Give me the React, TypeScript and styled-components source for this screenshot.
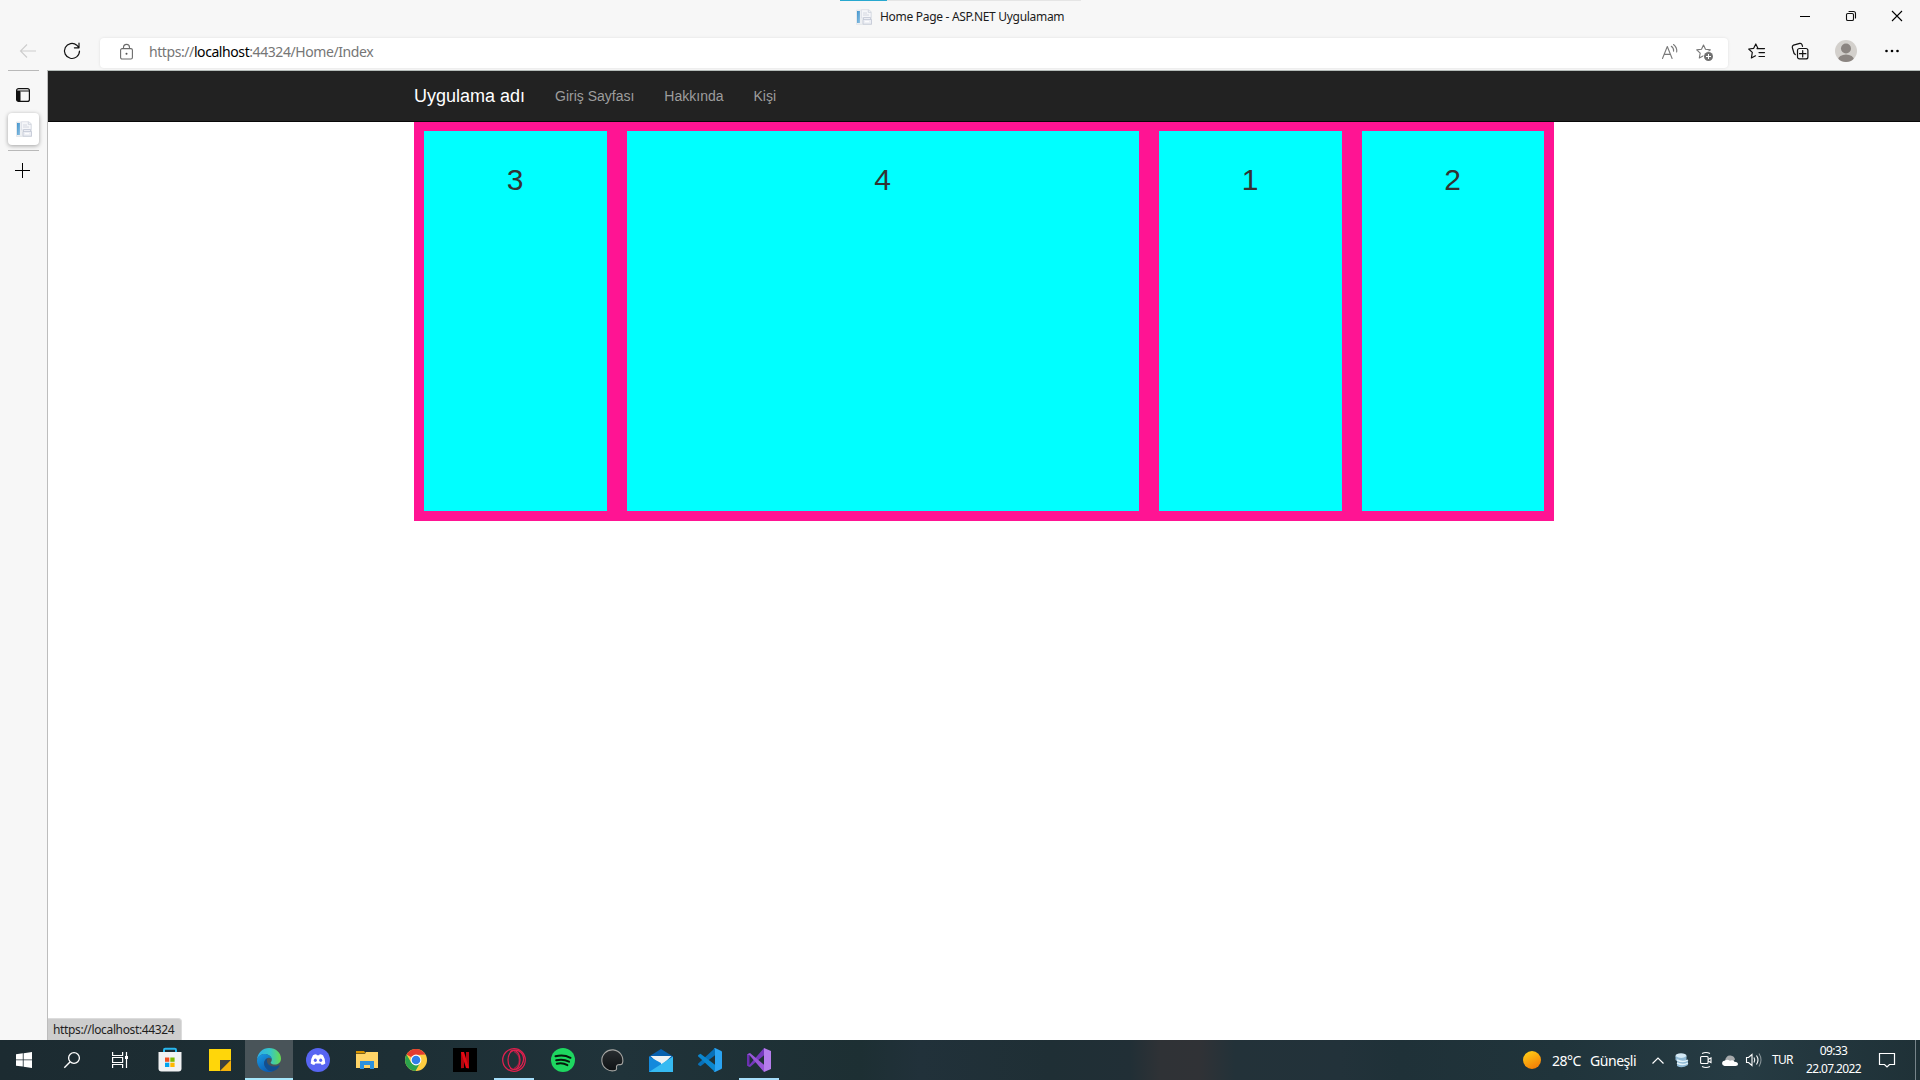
import React from 'react';
import styled, { createGlobalStyle } from 'styled-components';

const ui = `"Noto Sans", "Open Sans", sans-serif`;

const Global = createGlobalStyle`
  * { box-sizing: border-box; }
  body { margin: 0; background: #f7f7f7; overflow: hidden; }
  svg { display: block; overflow: visible; flex: none; }
`;

const Screen = styled.div`
  display: flex;
  flex-direction: column;
  width: 1920px;
  height: 1080px;
  background: #f7f7f7;
  font-family: ${ui};
`;

const TitleBar = styled.header`
  display: grid;
  grid-template-columns: 840px 241px 1fr;
  height: 34px;
`;

const TitleTab = styled.div`
  grid-column: 2;
  display: flex;
  align-items: center;
  padding: 0 0 2px 16px;
  gap: 8px;
  border-top: 1px solid #e5e5e5;
  border-image: linear-gradient(90deg, #28a8cf 48px, #e5e5e5 48px) 1;
`;

const TitleText = styled.span<{ $w: number }>`
  width: ${p => p.$w}px;
  font-size: 12px;
  line-height: 16px;
  letter-spacing: -0.3px;
  color: #1b1b1b;
  white-space: nowrap;
`;

const WindowButtons = styled.div`
  display: flex;
  justify-content: flex-end;
`;

const WindowButton = styled.div`
  display: grid;
  place-items: center;
  width: 46px;
  height: 32px;
`;

const Toolbar = styled.div`
  display: flex;
  align-items: center;
  height: 36px;
  padding-bottom: 2px;
`;

const ToolSlot = styled.div<{ $w: number }>`
  display: grid;
  place-items: center;
  width: ${p => p.$w}px;
  height: 32px;
  flex: none;
`;

const AddressBar = styled.div`
  display: flex;
  align-items: center;
  width: 1628px;
  height: 30px;
  margin: 3px 0 0 0;
  background: #fff;
  border-radius: 4px;
  box-shadow: 0 0 3px rgba(0, 0, 0, 0.1);
`;

const Url = styled.div`
  flex: 1;
  padding-bottom: 2px;
  font-size: 14px;
  line-height: 20px;
  color: #767676;
  letter-spacing: -0.42px;
  b { font-weight: 400; color: #000; }
`;

const Body = styled.div`
  display: flex;
  height: 970px;
`;

const Rail = styled.aside`
  display: flex;
  flex-direction: column;
  align-items: center;
  width: 47px;
  flex: none;
`;

const RailLine = styled.div`
  width: 31px;
  height: 1px;
  background: #b9b9b9;
`;

const RailSlot = styled.div<{ $h: number; $top?: number }>`
  display: grid;
  place-items: center;
  width: 31px;
  height: ${p => p.$h}px;
  padding: ${p => p.$top ?? 0}px 2px 0 0;
`;

const RailTab = styled(RailSlot)`
  padding: 0 0 0 1px;
  background: #fff;
  border-radius: 4px;
  margin-bottom: 5px;
  box-shadow: 0 1px 4px rgba(0, 0, 0, 0.35);
`;

const Page = styled.main`
  position: relative;
  flex: 1;
  background: #fff;
  border-top: 1px solid #b5bcb9;
  border-left: 1px solid #bdbdbd;
  font-family: "Liberation Sans", Arial, sans-serif;
`;

const NavBar = styled.nav`
  display: flex;
  align-items: center;
  height: 51px;
  padding-left: 366px;
  background: #222;
  border-bottom: 1px solid #080808;
`;

const Brand = styled.a`
  width: 126px;
  font-size: 18px;
  line-height: 20px;
  color: #fff;
`;

const NavLink = styled.a`
  padding: 0 15px;
  font-size: 14px;
  line-height: 20px;
  color: #9d9d9d;
`;

const Container = styled.section`
  display: grid;
  grid-template-columns: 183px 512px 183px 182px;
  gap: 20px;
  width: 1140px;
  height: 399px;
  margin-left: 366px;
  padding: 9px 10px 10px;
  background: #ff1493;
`;

const Cell = styled.div`
  padding: 32px 1px 0 0;
  background: #0ff;
  color: #333;
  font-size: 30px;
  line-height: 33px;
  text-align: center;
`;

const StatusBubble = styled.div`
  position: absolute;
  left: 0;
  bottom: 0;
  width: 134px;
  height: 22px;
  padding: 3px 0 0 5px;
  background: #cdcdcd;
  border: 1px solid #dcdcdc;
  border-width: 1px 1px 0 0;
  border-radius: 0 4px 0 0;
  font: 12px/16px ${ui};
  letter-spacing: -0.36px;
  color: #1e1e1e;
  white-space: nowrap;
`;

const Taskbar = styled.footer`
  display: flex;
  height: 40px;
  background: linear-gradient(90deg, #1c2b31 0, #1d2f35 400px, #20333a 620px, #1d2f33 860px, #21313a 920px, #1f2f35 1050px, #212f36 1130px, #2f3236 1160px, #303236 1200px, #233239 1235px, #22323a 1340px, #1f3138 1400px, #20343b 1560px, #263b43 1740px, #1f3137 1920px);
`;

const Task = styled.div<{ $w?: number; $active?: boolean; $running?: boolean }>`
  display: grid;
  place-items: center;
  width: ${p => p.$w ?? 49}px;
  flex: none;
  background: ${p => (p.$active ? '#495459' : 'transparent')};
  box-shadow: ${p => (p.$active ? 'inset 0 -2px #a6e7fb' : 'none')};
  background-image: ${p => (p.$running ? 'linear-gradient(#a6defa, #a6defa)' : 'none')};
  background-size: 40px 2px;
  background-position: center bottom;
  background-repeat: no-repeat;
`;

const Tray = styled.div`
  display: flex;
  align-items: center;
  margin-left: auto;
  color: #fff;
`;

const TraySlot = styled.div<{ $w: number }>`
  display: grid;
  place-items: center;
  width: ${p => p.$w}px;
  height: 40px;
`;

const TrayText = styled.div<{ $w: number; $size: number; $track?: number; $top?: number }>`
  width: ${p => p.$w}px;
  padding-top: ${p => p.$top ?? 0}px;
  font-size: ${p => p.$size}px;
  letter-spacing: ${p => p.$track ?? 0}px;
  line-height: 18px;
  white-space: nowrap;
`;

const Clock = styled(TrayText)`
  text-align: center;
  line-height: 18px;
  padding-bottom: 1px;
`;

const DesktopEdge = styled.div`
  width: 5px;
  height: 40px;
  border-left: 1px solid #77848a;
`;

const stroke = { fill: 'none', stroke: '#111', strokeWidth: 1.1, strokeLinecap: 'round', strokeLinejoin: 'round' } as const;

const Favicon = () => (
  <svg width="16" height="16" viewBox="0 0 16 16">
    <defs>
      <linearGradient id="fav" x2="1" y2="1"><stop stopColor="#3f93cc" /><stop offset="1" stopColor="#93c3e3" /></linearGradient>
    </defs>
    <path d="M.5 1h13l2 2v12.500H.5z" fill="#edeff2" stroke="#dfe2e6" strokeWidth=".7" />
    <path d="M1 2h3v12H1z" fill="url(#fav)" />
    <path d="M5.500 .7h7l2.500 2.500V9H5.500z" fill="#f5f6f9" stroke="#d5d9e2" strokeWidth=".6" />
    <path d="M12.300 .7v2.700H15M7 4h4M7 6h6" stroke="#cbd0db" fill="none" strokeWidth=".8" />
    <path d="M7.500 10.500V8.500h7v2M7 10.500h8.500v4.700H7z" fill="#eceef4" stroke="#c2c7d4" strokeWidth=".8" />
    <path d="M9 12.700h4" stroke="#fff" />
  </svg>
);

const Star = 'M7.500 1 L9.500 5.300 L14.300 5.900 L10.800 9.200 L11.700 14 L7.500 11.700 L3.300 14 L4.200 9.200 L.7 5.900 L5.500 5.300 Z';

const Edge = () => (
  <svg width="24" height="24" viewBox="0 0 24 24">
    <defs>
      <linearGradient id="eg" x1="0" y1=".4" x2="1" y2=".4"><stop stopColor="#2daeea" /><stop offset=".55" stopColor="#36c6c7" /><stop offset="1" stopColor="#68dc4d" /></linearGradient>
      <linearGradient id="eb" x1="0" y1="0" x2=".6" y2="1"><stop stopColor="#199ce4" /><stop offset="1" stopColor="#0b5db3" /></linearGradient>
    </defs>
    <path d="M0 12C.4 4.500 6 0 12 0c7 0 12 5 12 10.500 0 4-3 6-6.200 6-3.500 0-4.400-1.500-4-2.200.6-.8 1-1.500 1-2.800C14.800 8.500 11.500 6 7.500 6 4 6 1 8.500 0 12z" fill="url(#eg)" />
    <path d="M0 12C1 8.300 4 6 7.500 6c4 0 7.300 2.500 7.300 5.500-1-1.300-2.300-2-4-1.600-2.800.7-4.300 4-3.300 7.200 1.200 4 5 6.500 8.500 6.200C14 24 12.500 24 11.500 24 5 24-.3 19 0 12z" fill="url(#eb)" />
    <path d="M10.800 9.900C7 12 6 16 8.700 19.800c2.200 3 5 3.900 7.500 3.400 2.800-1 4.900-2.700 6.200-5 .4-.8-.2-1-.8-.7C17 20 11.500 18 10.200 14.500c-.6-1.700-.3-3.400.6-4.600z" fill="#114f91" />
  </svg>
);

const VisualStudio = ({ code }: { code?: boolean }) => (
  <svg width="24" height="24" viewBox="0 0 24 24">
    {code ? (
      <>
        <path d="M17 0v7.200L2.500 18.200.3 17c-.4-.4-.4-1 0-1.400z" fill="#0871b9" />
        <path d="M17 24v-7.200L2.500 5.800.3 7c-.4.400-.4 1 0 1.400z" fill="#0b87d0" />
        <path d="M17 0l5.800 2.700c.7.300 1.200.8 1.200 1.500v15.600c0 .7-.5 1.200-1.200 1.500L17 24c-.5 0-1-.2-1.400-.6.8.3 1.400 0 1.400-.8V1.400c0-.8-.6-1.100-1.400-.8.4-.4.900-.6 1.400-.6z" fill="#2ba4f2" />
      </>
    ) : (
      <>
        <path d="M0 6.500 2.500 5v14L0 17.500z" fill="#6a2faf" />
        <path d="M17 0v7.300L3 19l-3-1.500 2.300-.5z" fill="#7438bd" />
        <path d="M17 24v-7.300L3 5 0 6.500l2.300.5z" fill="#9856d8" />
        <path d="M17 0l7 3v18l-7 3z" fill="#b57dec" />
      </>
    )}
  </svg>
);

export default function App() {
  return (
    <Screen>
      <Global />
      <TitleBar>
        <TitleTab>
          <Favicon />
          <TitleText $w={184}>Home Page - ASP.NET Uygulamam</TitleText>
        </TitleTab>
        <WindowButtons>
          <WindowButton><svg width="10" height="10"><path d="M0 5.500h10" stroke="#000" /></svg></WindowButton>
          <WindowButton>
            <svg width="10" height="10"><rect x=".5" y="2.500" width="7" height="7" rx="1.300" {...stroke} /><path d="M3 .5h4.500q2 0 2 2V7" {...stroke} /></svg>
          </WindowButton>
          <WindowButton><svg width="10" height="10"><path d="M0 0l10 10M10 0L0 10" stroke="#000" strokeWidth="1.100" /></svg></WindowButton>
        </WindowButtons>
      </TitleBar>

      <Toolbar>
        <ToolSlot $w={56}><svg width="16" height="14"><path d="M16 7H.5M7 .5L.5 7 7 13.500" fill="none" stroke="#cdcdcd" strokeWidth="1.100" /></svg></ToolSlot>
        <ToolSlot $w={32}>
          <svg width="16" height="16"><path d="M15.500 8A7.500 7.500 0 1 1 12.800 2.200L14.700 4.400M15 .2V4.800H10.400" {...stroke} strokeWidth="1.200" /></svg>
        </ToolSlot>
        <ToolSlot $w={12} />
        <AddressBar>
          <ToolSlot $w={3} />
          <ToolSlot $w={46}>
            <svg width="13" height="18"><rect x=".6" y="4.600" width="11.800" height="10.400" rx="1.500" fill="none" stroke="#6b6b6b" strokeWidth="1.100" /><path d="M3.500 4.500V3.400a3 3 0 0 1 6 0v1.100" fill="none" stroke="#6b6b6b" strokeWidth="1.100" /><circle cx="6.500" cy="9.800" r="1" fill="#555" /></svg>
          </ToolSlot>
          <Url>https://<b>localhost</b>:44324/Home/Index</Url>
          <ToolSlot $w={34}>
            <svg width="16" height="17" viewBox="0 0 16 17"><path d="M.5 14.500 5.300 2.500l4.800 12M2.300 10.400h6M9.300 2.300q2.700 1.800 2.300 5M11.500.5q3.800 3 3.200 7.500" {...stroke} stroke="#7a7a7a" /></svg>
          </ToolSlot>
          <ToolSlot $w={36}>
            <svg width="18" height="17"><path d={Star} {...stroke} stroke="#777" /><circle cx="12.500" cy="12.500" r="5.200" fill="#fff" /><circle cx="12.500" cy="12.500" r="4.500" fill="#707070" /><path d="M10 12.500h5M12.500 10v5" stroke="#fff" /></svg>
          </ToolSlot>
          <ToolSlot $w={5} />
        </AddressBar>
        <ToolSlot $w={56}>
          <svg width="17" height="16"><path d="M10 5.500 7.800 1 5.700 5.300.7 6l3.600 3.400L3.400 15l4.100-2.200M9 5.600h7.500M11 9.600h5.500M11 13.500h5.500" {...stroke} strokeWidth="1.200" /></svg>
        </ToolSlot>
        <ToolSlot $w={32}>
          <svg width="17" height="17"><rect x="5.500" y="5.500" width="10.400" height="10.400" rx="2" {...stroke} strokeWidth="1.200" /><path d="M10.700 7.500v6.400M7.500 10.700h6.400M3.300 11.500 2.100 10.500.3 4.500Q0 2.700 1.500 2.100L7.800.4q1.600-.3 2.200 1.200l.5 1.800" {...stroke} strokeWidth="1.200" /></svg>
        </ToolSlot>
        <ToolSlot $w={60}>
          <svg width="22" height="22"><defs><clipPath id="av"><circle cx="11" cy="11" r="11" /></clipPath></defs><g clipPath="url(#av)"><rect width="22" height="22" fill="#d3d0cc" /><circle cx="11" cy="8.500" r="5" fill="#8b8581" /><ellipse cx="11" cy="20" rx="8" ry="5.500" fill="#8b8581" /></g></svg>
        </ToolSlot>
        <ToolSlot $w={32}><svg width="14" height="4"><circle cx="1.500" cy="2" r="1.300" /><circle cx="7" cy="2" r="1.300" /><circle cx="12.500" cy="2" r="1.300" /></svg></ToolSlot>
      </Toolbar>

      <Body>
        <Rail>
          <RailLine />
          <RailSlot $h={42} $top={6}>
            <svg width="14" height="14"><rect x=".6" y=".6" width="12.800" height="12.800" rx="2" {...stroke} strokeWidth="1.200" /><path d="M1 3.500h3v9.500H2L1 12zM1 3h12" stroke="#111" fill="#111" /></svg>
          </RailSlot>
          <RailTab $h={32}><Favicon /></RailTab>
          <RailLine />
          <RailSlot $h={39}><svg width="15" height="15"><path d="M0 7.500h15M7.500 0v15" stroke="#000" /></svg></RailSlot>
        </Rail>
        <Page>
          <NavBar>
            <Brand>Uygulama adı</Brand>
            <NavLink>Giriş Sayfası</NavLink>
            <NavLink>Hakkında</NavLink>
            <NavLink>Kişi</NavLink>
          </NavBar>
          <Container>
            {[3, 4, 1, 2].map(n => <Cell key={n}>{n}</Cell>)}
          </Container>
          <StatusBubble>https://localhost:44324</StatusBubble>
        </Page>
      </Body>

      <Taskbar>
        <Task $w={48}><svg width="16" height="16"><path d="M0 2.300 6.800 1.300V7.500H0zM7.600 1.200 16 0v7.500H7.600zM0 8.300h6.800v6.300L0 13.700zM7.600 8.300H16V16l-8.400-1.300z" fill="#fff" /></svg></Task>
        <Task $w={48}><svg width="16" height="16"><circle cx="10" cy="6" r="5.400" fill="none" stroke="#fff" strokeWidth="1.300" /><path d="M6 10 .3 15.700" stroke="#fff" strokeWidth="1.400" /></svg></Task>
        <Task $w={48}><svg width="16" height="16"><path d="M.6 0v3.500h10V0M.6 16v-3.500h10V16M.6 5.500h10v5H.6zM14.500 0v16" fill="none" stroke="#fff" strokeWidth="1.200" /><path d="M13 4h3v3h-3z" fill="#fff" /></svg></Task>
        <Task $w={52}>
          <svg width="24" height="24"><path d="M6 6V2Q6 .8 7.200.8h9.600Q18 .8 18 2v4" fill="none" stroke="#28b8f0" strokeWidth="2" /><path d="M.5 4h23v16.500q0 3-3 3h-17q-3 0-3-3z" fill="#f1f2f3" /><path d="M7 9.500h4.300v4.300H7z" fill="#f25022" /><path d="M12.300 9.500h4.300v4.300h-4.300z" fill="#7fba00" /><path d="M7 14.700h4.300V19H7z" fill="#00a4ef" /><path d="M12.300 14.700h4.300V19h-4.300z" fill="#ffb900" /></svg>
        </Task>
        <Task $w={48}><svg width="22" height="22"><path d="M0 0h22v11L11 22H0z" fill="#ffd60a" /><path d="M11 11h11L11 22z" fill="#3f3f3f" /><path d="M22 11v11H11z" fill="#f5b20b" /></svg></Task>
        <Task $w={1} />
        <Task $w={48} $active><Edge /></Task>
        <Task $w={50}>
          <svg width="24" height="24"><circle cx="12" cy="12" r="12" fill="#5765f2" /><path d="M7 7.200q1.600-.9 3.300-1l.5 1h2.400l.5-1q1.700.1 3.300 1 2.500 4 2.300 8.200-1.600 1.200-3.600 1.700l-1-1.500H9.300l-1 1.500q-2-.5-3.600-1.700Q4.500 11.200 7 7.200z" fill="#fff" /><ellipse cx="9.300" cy="12.300" rx="1.500" ry="1.700" fill="#5765f2" /><ellipse cx="14.700" cy="12.300" rx="1.500" ry="1.700" fill="#5765f2" /></svg>
        </Task>
        <Task $w={48}><svg width="22" height="18"><path d="M0 0h8l2 2.500H0z" fill="#d99400" /><path d="M0 3h9l1-2h12v16H0z" fill="#ffd467" /><path d="M4 18v-8h14v8h-4v-4H8v4z" fill="#2b91df" /></svg></Task>
        <Task>
          <svg width="22" height="22" viewBox="0 0 22 22"><circle cx="11" cy="11" r="11" fill="#ffcd40" /><path d="M11 11 1.500 5.500A11 11 0 0 1 20.500 5.500L11 6z" fill="#e53b30" /><path d="M1.500 5.500A11 11 0 0 0 10.500 22L15.300 13.500 11 16 6.300 13.800z" fill="#2ba24c" /><circle cx="11" cy="11" r="5.400" fill="#fff" /><circle cx="11" cy="11" r="4.300" fill="#317ee8" /></svg>
        </Task>
        <Task><svg width="24" height="24"><path d="M0 0h24v24H0z" fill="#000" /><path d="M8 4h3v16l-3 .3zM13 4h3v16.300l-3-.3z" fill="#b20710" /><path d="M8 4h3l5 16.300-3-.3z" fill="#e50914" /></svg></Task>
        <Task $running><svg width="24" height="24"><g fill="none" stroke="#e0204e" strokeWidth="1.250"><circle cx="12" cy="12" r="11.300" /><ellipse cx="12" cy="12" rx="6" ry="9.600" /><path d="M8 3.500C18-1 22 7 21.500 12S16 24 8 20.500" /><path d="M12 3.500C19 7 19 17 12 20.500" opacity=".6" /></g></svg></Task>
        <Task><svg width="24" height="24"><circle cx="12" cy="12" r="12" fill="#1ed760" /><path d="M4.500 8.300q8-2.300 15 1.500M5.200 12.300q6.800-1.800 12.800 1.400M5.800 15.800q5.800-1.300 10.600 1.300" fill="none" stroke="#06190c" strokeWidth="2" strokeLinecap="round" /></svg></Task>
        <Task>
          <svg width="22" height="22"><defs><linearGradient id="dk" x2="0" y2="1"><stop stopColor="#292e31" /><stop offset="1" stopColor="#0e1113" /></linearGradient></defs><path d="M21.500 14A10.500 10.500 0 1 0 14 21.500Q16 21 15.500 19 15 15.500 18.500 15.500 21 16 21.500 14z" fill="url(#dk)" stroke="#a5a5a2" strokeWidth="1.100" /></svg>
        </Task>
        <Task>
          <svg width="24" height="23"><path d="M0 7.500 12 0l12 7.500V12H0z" fill="#0760ae" /><path d="M1.500 7h21L12 17z" fill="#eef2f4" /><path d="M0 7.500 12 14v9H0z" fill="#1389dc" /><path d="M24 7.500v15.500H0z" fill="#36baf2" /></svg>
        </Task>
        <Task><VisualStudio code /></Task>
        <Task $running><VisualStudio /></Task>
        <Tray>
          <TraySlot $w={18}><svg width="18" height="18"><defs><linearGradient id="sun" x1=".2" x2=".7" y2="1"><stop stopColor="#ffce16" /><stop offset="1" stopColor="#f47c06" /></linearGradient></defs><circle cx="9" cy="9" r="9" fill="url(#sun)" /></svg></TraySlot>
          <TraySlot $w={11} />
          <TrayText $w={38} $size={14} $track={-0.5} $top={2}>28°C</TrayText>
          <TrayText $w={57} $size={14} $track={-0.45} $top={2}>Güneşli</TrayText>
          <TraySlot $w={22}><svg width="12" height="7"><path d="M.5 6.500 6 1l5.500 5.500" fill="none" stroke="#fff" strokeWidth="1.200" /></svg></TraySlot>
          <TraySlot $w={26}><svg width="14" height="15"><ellipse cx="6" cy="3" rx="5.500" ry="2.700" fill="#d3e9f5" /><path d="M.5 3q6 4 11 0v4L13 8v4q-6 4-11 1V8L.5 7z" fill="#8fb9d4" /><path d="M2 7q6 3 11 0M2 10q6 3 11 0" fill="none" stroke="#e1f2fa" strokeWidth="1.400" /></svg></TraySlot>
          <TraySlot $w={22}><svg width="12" height="16"><g fill="none" stroke="#fff" strokeWidth="1.100"><rect x=".6" y="4.500" width="7.500" height="7" rx="1" /><path d="M8 7.500l3-1.500v4.500L8 9M2 1.500q4-2 8 0M2 14.500q4 2 8 0" /></g></svg></TraySlot>
          <TraySlot $w={26}><svg width="16" height="11"><path d="M3 6Q4 0 8.500.5q4 .5 4.500 4l-5 5z" fill="#a7aaac" /><path d="M2.500 11Q0 10.500 0 8q.3-2.300 3-2.400 2-2 5 .2 3-1.300 4.500 1 3.500 0 3.500 2.500 0 1.700-2.500 1.700z" fill="#fff" /></svg></TraySlot>
          <TraySlot $w={22}><svg width="16" height="14"><g fill="none" stroke="#fff" strokeWidth="1.100"><path d="M.5 4.500h2L6 1.500v11L2.500 9.500h-2zM8 4.500q1.500 2.500 0 5M10.500 2.500q3 4.500 0 9" /><path d="M13 .5q4 6.500 0 13" opacity=".45" /></g></svg></TraySlot>
          <TraySlot $w={7} />
          <TrayText $w={30} $size={12} $track={-0.7}>TUR</TrayText>
          <Clock $w={63} $size={12} $track={-0.65}>09:33<br />22.07.2022</Clock>
          <TraySlot $w={43}><svg width="16" height="16"><path d="M.5 1.500h15v11h-5L8 15l-2.500-2.500h-5z" fill="none" stroke="#fff" strokeWidth="1.200" /></svg></TraySlot>
          <TraySlot $w={7} />
          <DesktopEdge />
        </Tray>
      </Taskbar>
    </Screen>
  );
}
